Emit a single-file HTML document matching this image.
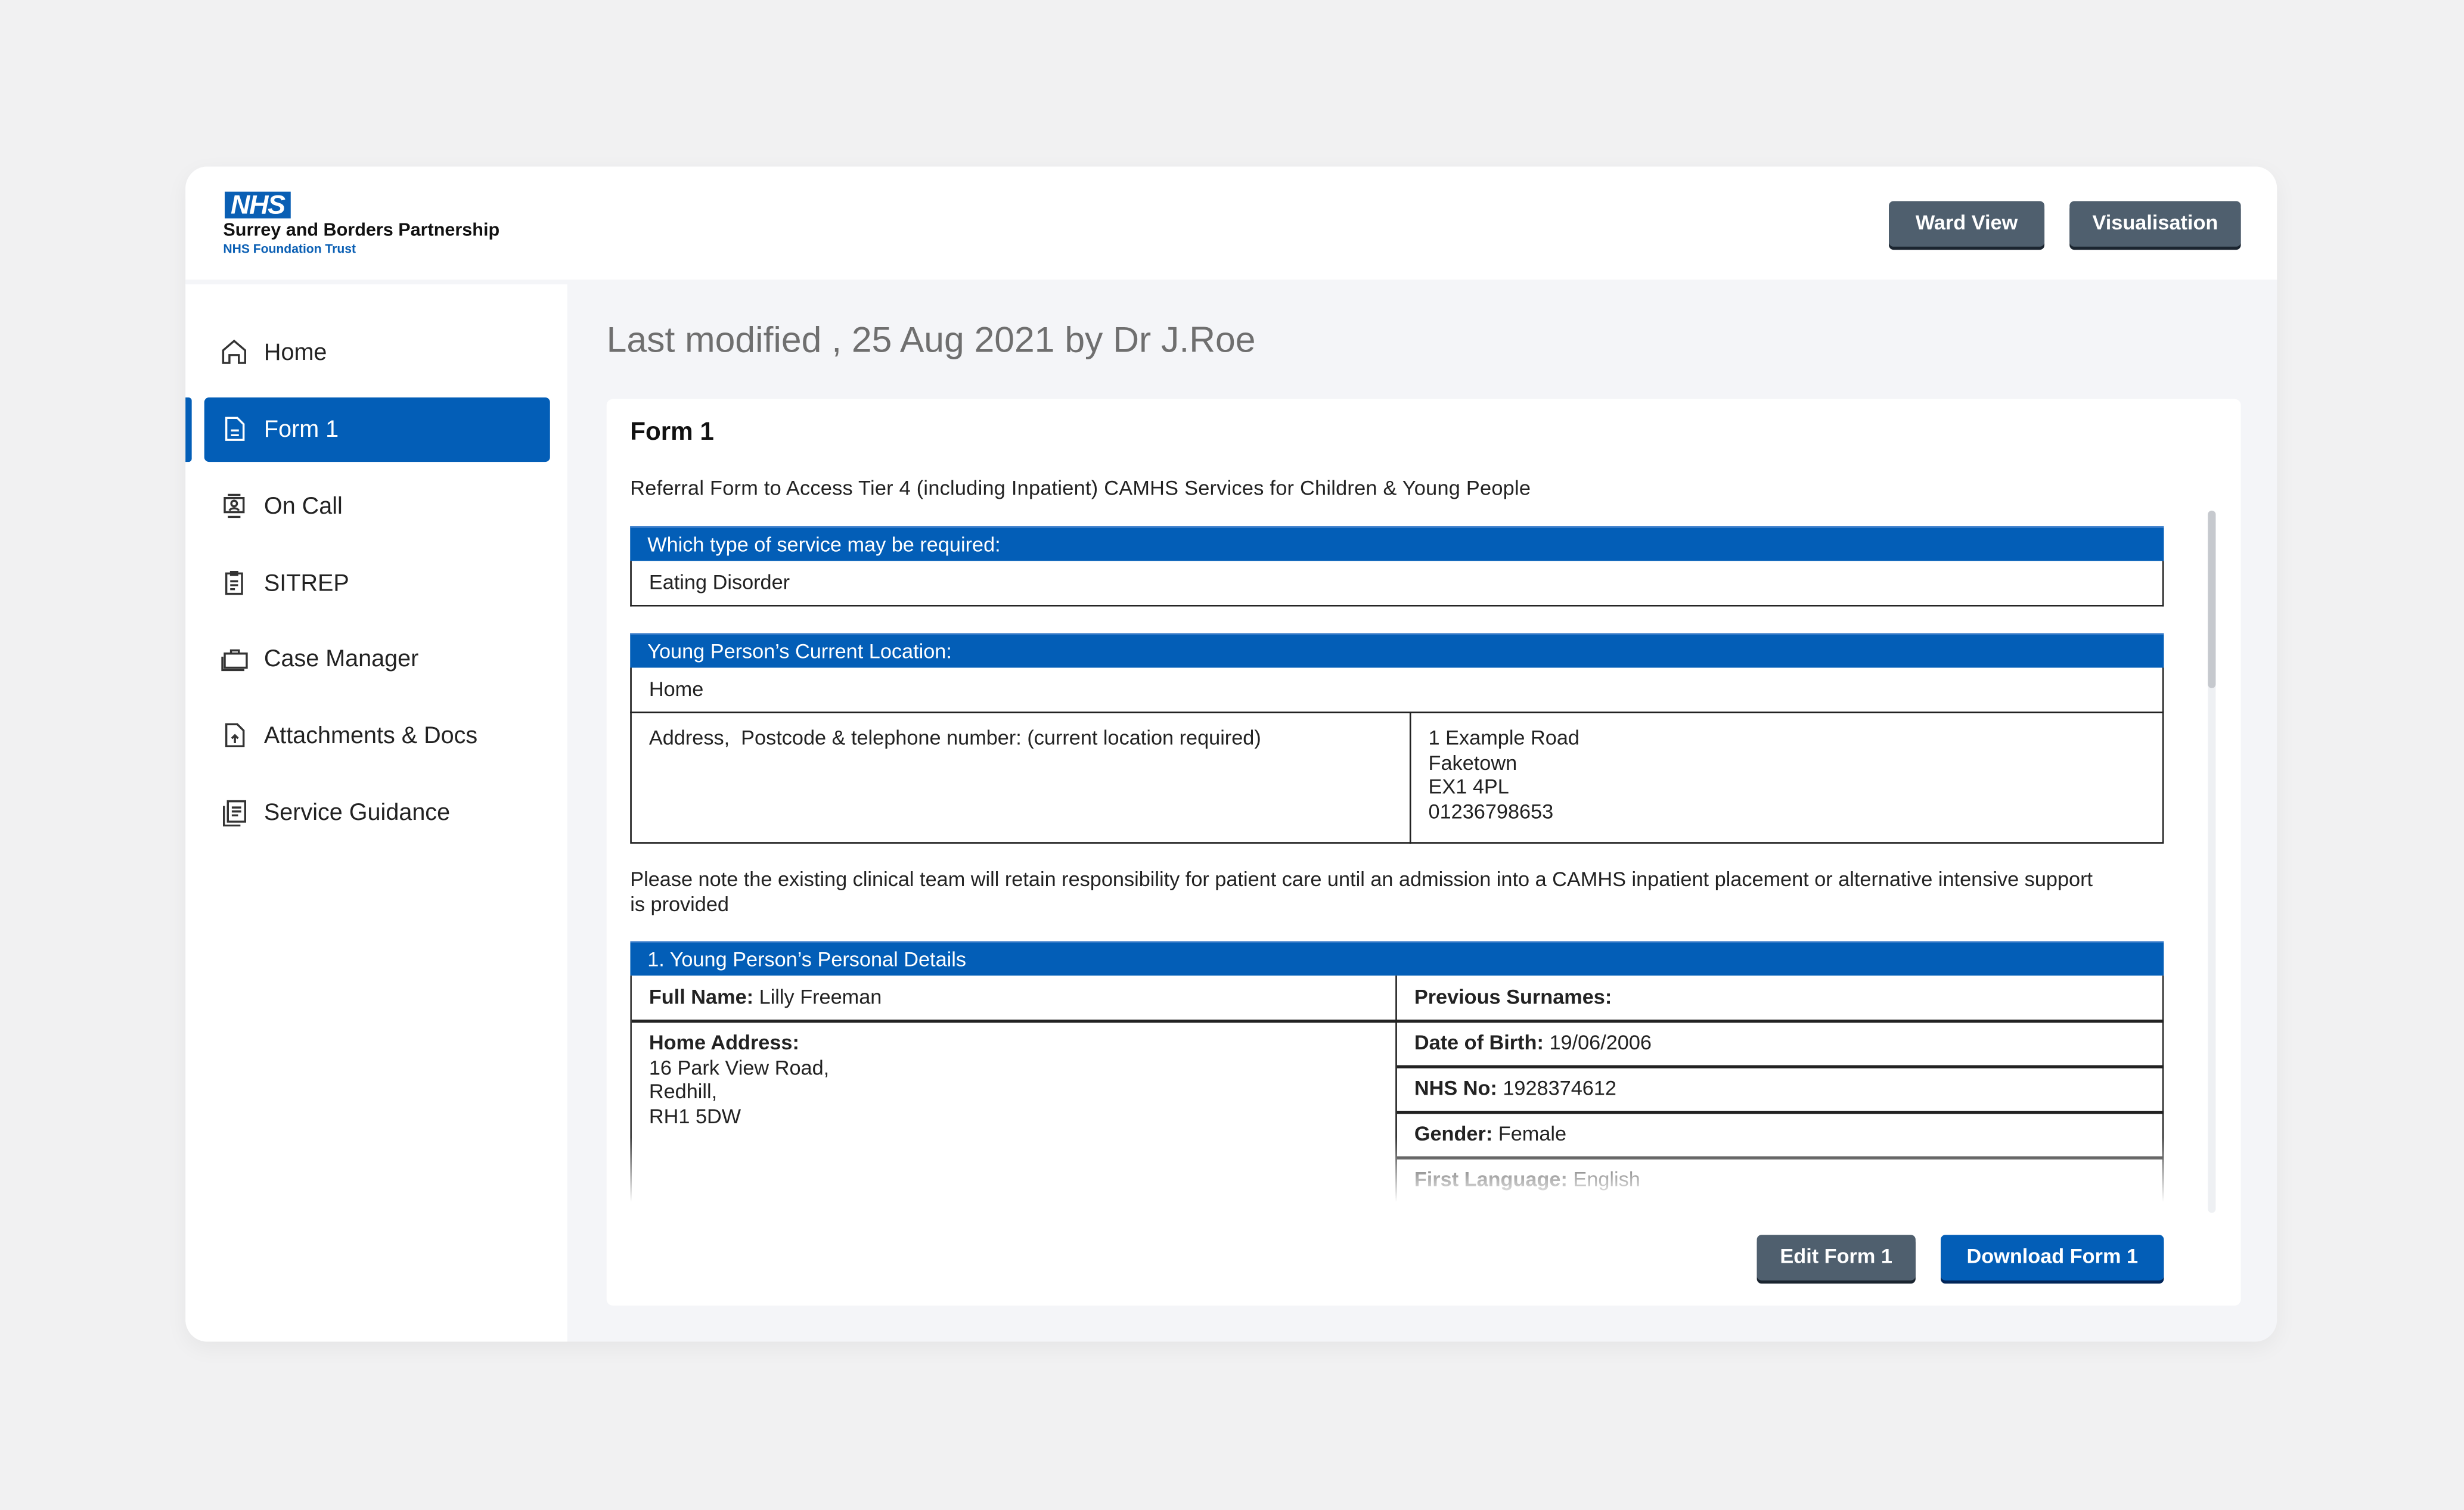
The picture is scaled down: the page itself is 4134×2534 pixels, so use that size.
<!DOCTYPE html>
<html><head><meta charset="utf-8"><style>
*{box-sizing:border-box;margin:0;padding:0}
html,body{width:4134px;height:2534px;overflow:hidden;background:#f1f1f2}
#w{position:absolute;left:0;top:0;width:1568px;height:961px;transform:scale(2.63648);transform-origin:0 0;font-family:"Liberation Sans",sans-serif;color:#222}
.a{position:absolute}
.card{left:118px;top:106px;width:1331px;height:748px;border-radius:14px;background:#f4f5f8;overflow:hidden;box-shadow:0 4px 14px rgba(0,0,0,.05)}
.hdr{left:0;top:0;width:1331px;height:72px;background:#fff}
.side{left:0;top:75px;width:243px;height:680px;background:#fff}
.btn{position:absolute;background:#4f5f6e;color:#fff;font-weight:bold;font-size:13px;text-align:center;border-radius:3px;box-shadow:0 2px 0 #1b2530;line-height:28px}
.nav{position:absolute;left:22px;font-size:15px;color:#222;display:flex;align-items:center}
.nav svg{width:18px;height:18px;margin-right:10px;stroke:#333;fill:none;stroke-width:1.3}
.fc{left:268px;top:148px;width:1040px;height:577px;background:#fff;border-radius:4px}
.t{position:absolute;left:15px;width:976px;font-size:13px}
.bh{background:#035eb7;color:#fff;height:22px;line-height:22px;padding-left:11px;border-top:1px solid #3b7ecb}
.row{border:1px solid #222;border-top:none;height:29px;line-height:27px;padding-left:11px}
b{font-weight:bold}
</style></head><body><div id="w">
<div class="a card">
 <div class="a hdr">
  <div class="a" style="left:25px;top:16px;width:42px;height:17px;background:#0a5fb4;color:#fff;font-weight:bold;font-style:italic;font-size:17px;line-height:17px;text-align:center;letter-spacing:-.5px">NHS</div>
  <div class="a" style="left:24px;top:34px;font-size:11.6px;font-weight:bold;color:#111">Surrey and Borders Partnership</div>
  <div class="a" style="left:24px;top:48px;font-size:8px;font-weight:bold;color:#0a5fb4">NHS Foundation Trust</div>
  <div class="btn" style="left:1084px;top:22px;width:99px;height:29px">Ward View</div>
  <div class="btn" style="left:1199px;top:22px;width:109px;height:29px">Visualisation</div>
 </div>
 <div class="a side">
  <div class="nav" style="top:34px"><svg viewBox="0 0 18 18"><path d="M2 8L9 2l7 6v8h-4v-5H6v5H2z"/></svg>Home</div>
  <div class="a" style="left:0;top:72px;width:4px;height:41px;background:#035eb7;border-radius:0 2px 2px 0"></div>
  <div class="a" style="left:12px;top:72px;width:220px;height:41px;background:#035eb7;border-radius:3px"></div>
  <div class="nav" style="top:83px;color:#fff"><svg viewBox="0 0 18 18" style="stroke:#fff"><path d="M4 2h7l4 4v10H4z M7 10h5M7 13h5"/></svg>Form 1</div>
  <div class="nav" style="top:132px"><svg viewBox="0 0 18 18"><path d="M3 4h12v9H3z M5 2h8M5 16h8"/><circle cx="9" cy="7.5" r="1.8"/><path d="M6 12c1-2 5-2 6 0"/></svg>On Call</div>
  <div class="nav" style="top:181px"><svg viewBox="0 0 18 18"><path d="M4 3h10v13H4z M7 2h4v2H7z M6.5 8h5M6.5 10.5h5M6.5 13h3"/></svg>SITREP</div>
  <div class="nav" style="top:229px"><svg viewBox="0 0 18 18"><path d="M3 6h14v9H3z M7 6V4h5v2 M1.5 8v8.5h14"/></svg>Case Manager</div>
  <div class="nav" style="top:278px"><svg viewBox="0 0 18 18"><path d="M4 2h7l4 4v10H4z M9.5 14V9M7.5 11l2-2 2 2"/></svg>Attachments &amp; Docs</div>
  <div class="nav" style="top:327px"><svg viewBox="0 0 18 18"><path d="M5 2h11v13H5z M2.5 5v12.5H13 M7.5 6h6M7.5 8.5h6M7.5 11h4"/></svg>Service Guidance</div>
 </div>
 <div class="a" style="left:268px;top:97px;font-size:23px;color:#6f6f6f">Last modified , 25 Aug 2021 by Dr J.Roe</div>
 <div class="a fc">
  <div class="a" style="left:15px;top:13px;font-size:16px;font-weight:bold;color:#111">Form 1</div>
  <div class="a" style="left:15px;top:49px;font-size:13px;letter-spacing:.1px">Referral Form to Access Tier 4 (including Inpatient) CAMHS Services for Children &amp; Young People</div>
  <div class="t" style="top:81px"><div class="bh">Which type of service may be required:</div><div class="row">Eating Disorder</div></div>
  <div class="t" style="top:149px"><div class="bh">Young Person’s Current Location:</div><div class="row">Home</div>
   <div style="border:1px solid #222;height:84px;margin-top:-1px;position:relative">
    <div class="a" style="left:11px;top:8px">Address,&nbsp; Postcode &amp; telephone number: (current location required)</div>
    <div class="a" style="left:495px;top:0;width:1px;height:83px;background:#222"></div>
    <div class="a" style="left:507px;top:8px;line-height:15.5px">1 Example Road<br>Faketown<br>EX1 4PL<br>01236798653</div>
   </div></div>
  <div class="a" style="left:15px;top:298px;width:990px;font-size:13px;line-height:15.5px;white-space:nowrap">Please note the existing clinical team will retain responsibility for patient care until an admission into a CAMHS inpatient placement or alternative intensive support<br>is provided</div>
  <div class="t" style="top:345px;height:166px;overflow:hidden;-webkit-mask-image:linear-gradient(#000 125px,transparent 166px)"><div class="bh">1. Young Person’s Personal Details</div>
   <div style="position:relative;border-left:1px solid #222;border-right:1px solid #222;height:150px">
    <div class="a" style="left:486px;top:0;width:1px;height:150px;background:#222"></div>
    <div class="a" style="left:0;top:28px;width:976px;height:2px;background:#222"></div>
    <div class="a" style="left:487px;top:57px;width:488px;height:2px;background:#222"></div>
    <div class="a" style="left:487px;top:86px;width:488px;height:2px;background:#222"></div>
    <div class="a" style="left:487px;top:115px;width:488px;height:2px;background:#222"></div>
    <div class="a" style="left:11px;top:6px"><b>Full Name:</b> Lilly Freeman</div>
    <div class="a" style="left:498px;top:6px"><b>Previous Surnames:</b></div>
    <div class="a" style="left:11px;top:35px;line-height:15.5px"><b>Home Address:</b><br>16 Park View Road,<br>Redhill,<br>RH1 5DW</div>
    <div class="a" style="left:498px;top:35px"><b>Date of Birth:</b> 19/06/2006</div>
    <div class="a" style="left:498px;top:64px"><b>NHS No:</b> 1928374612</div>
    <div class="a" style="left:498px;top:93px"><b>Gender:</b> Female</div>
    <div class="a" style="left:498px;top:122px"><b>First Language:</b> English</div>
   </div></div>
  <div class="a" style="left:1019px;top:71px;width:5px;height:447px;background:#eef0f3;border-radius:3px"></div>
  <div class="a" style="left:1019px;top:71px;width:5px;height:113px;background:#c6c9ce;border-radius:3px"></div>
  <div class="btn" style="left:732px;top:532px;width:101px;height:29px">Edit Form 1</div>
  <div class="btn" style="left:849px;top:532px;width:142px;height:29px;background:#035eb7;box-shadow:0 2px 0 #02265a">Download Form 1</div>
 </div>
</div>
</div></body></html>
